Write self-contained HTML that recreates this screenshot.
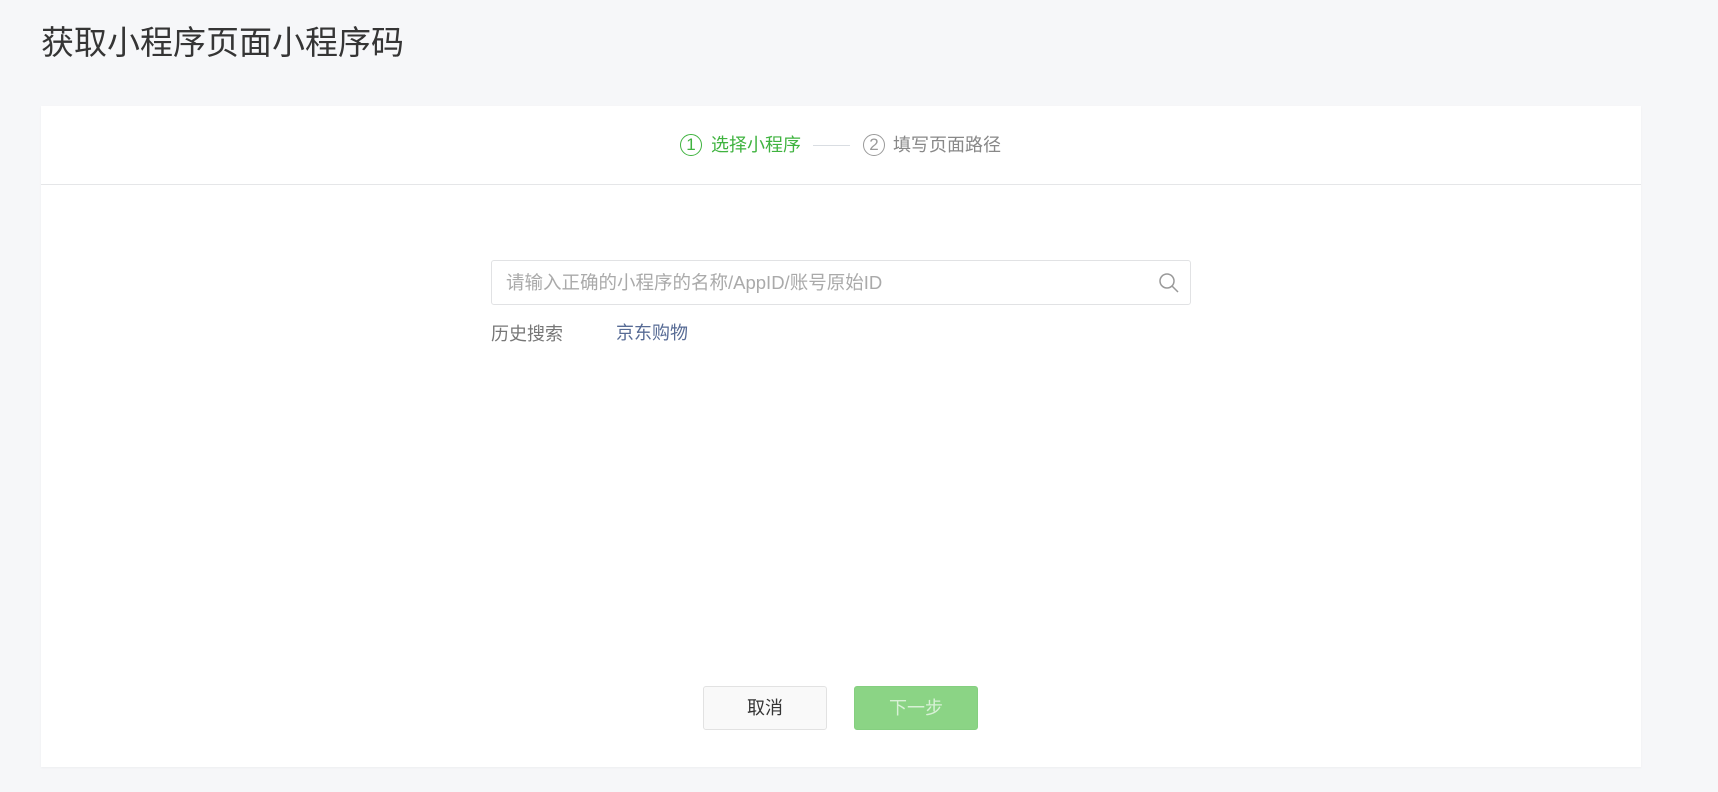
<!DOCTYPE html>
<html><head><meta charset="utf-8"><style>
*{margin:0;padding:0;box-sizing:border-box}
body{width:1718px;height:792px;background:#f6f7f9;font-family:"Liberation Sans","Noto Sans CJK SC",sans-serif;position:relative;overflow:hidden}
.title{position:absolute;left:41px;top:21px;font-size:33px;color:#353535;line-height:44px}
.card{position:absolute;left:41px;top:106px;width:1600px;height:661px;background:#fff;box-shadow:0 1px 2px rgba(0,0,0,.04)}
.hd{position:absolute;left:0;top:0;width:100%;height:79px;border-bottom:1px solid #e5e6e8}
.abs{position:absolute;white-space:nowrap}
.circ{position:absolute;width:22px;height:22px;border-radius:50%;font-size:17px;line-height:20px;text-align:center}
.inp{position:absolute;left:450px;top:154px;width:700px;height:45px;border:1px solid #e1e2e4;border-radius:3px}
.btn{position:absolute;top:580px;width:124px;height:44px;border-radius:3px;font-size:18px;line-height:42px;text-align:center}
</style></head><body>
<div class="title">获取小程序页面小程序码</div>
<div class="card">
 <div class="hd">
  <div class="circ" style="left:639px;top:28px;border:1.5px solid #3fb33f;color:#3fb33f">1</div>
  <div class="abs" style="left:670px;top:27px;font-size:18px;line-height:24px;color:#3fb33f">选择小程序</div>
  <div class="abs" style="left:772px;top:39px;width:37px;height:1px;background:#d9dde2"></div>
  <div class="circ" style="left:822px;top:28px;border:1.5px solid #9a9a9a;color:#9a9a9a">2</div>
  <div class="abs" style="left:852px;top:27px;font-size:18px;line-height:24px;color:#888">填写页面路径</div>
 </div>
 <div class="inp">
  <div class="abs" style="left:14px;top:11px;font-size:18.5px;line-height:22px;color:#aaa">请输入正确的小程序的名称/AppID/账号原始ID</div>
  <svg class="abs" style="right:10px;top:11px" width="22" height="22" viewBox="0 0 22 22"><circle cx="9" cy="9" r="7" fill="none" stroke="#999" stroke-width="1.5"/><path d="M14 14 L20 20" stroke="#999" stroke-width="1.5"/></svg>
 </div>
 <div class="abs" style="left:450px;top:216px;font-size:18px;line-height:24px;color:#777">历史搜索</div>
 <div class="abs" style="left:575px;top:215px;font-size:18px;line-height:24px;color:#576b95">京东购物</div>
 <div class="btn" style="left:662px;background:#f9f9f9;border:1px solid #e2e2e2;color:#353535">取消</div>
 <div class="btn" style="left:813px;background:#8bd485;border:1px solid #85cf80;color:#d8f1d6">下一步</div>
</div>
</body></html>
